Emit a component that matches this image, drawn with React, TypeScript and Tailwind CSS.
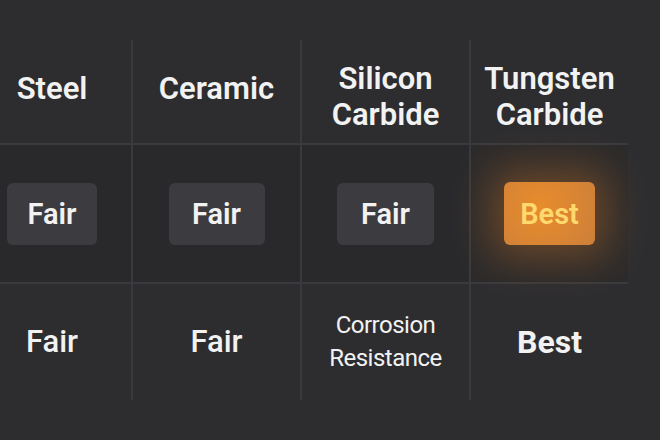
import React from 'react';

const FONT = { fontFamily: 'Roboto, "Liberation Sans", sans-serif' };

export default function App() {
  return (
    <div className="w-[660px] h-[440px] overflow-hidden bg-[#2d2d30] text-[#f2f2f2]" style={FONT}>
      <div className="mt-[40px] -ml-[27px] grid grid-cols-[160px_169px_169px_157px] grid-rows-[105px_139px_116px]">
        {/* header */}
        <div className="flex items-center justify-center border-r-2 border-b-2 border-[#3a3a3e] pb-[4px] text-[31px] font-semibold">
          Steel
        </div>
        <div className="flex items-center justify-center border-r-2 border-b-2 border-[#3a3a3e] pb-[4px] text-[31px] font-semibold">
          Ceramic
        </div>
        <div className="flex items-center justify-center border-r-2 border-b-2 border-[#3a3a3e] pt-[10px] text-center text-[31px] font-semibold leading-[36px]">
          Silicon<br />Carbide
        </div>
        <div className="flex items-center justify-center border-b-2 border-[#3a3a3e] pt-[10px] text-center text-[31px] font-semibold leading-[36px]">
          Tungsten<br />Carbide
        </div>

        {/* row 2 */}
        <div className="flex items-center justify-center border-r-2 border-b-2 border-[#3a3a3e] bg-[#29292c]">
          <div className="flex h-[62px] w-[90px] items-center justify-center rounded-md bg-[#3c3c40] pt-[2px] text-[29px] font-semibold">Fair</div>
        </div>
        <div className="flex items-center justify-center border-r-2 border-b-2 border-[#3a3a3e] bg-[#29292c]">
          <div className="flex h-[62px] w-[96px] items-center justify-center rounded-md bg-[#3c3c40] pt-[2px] text-[29px] font-semibold">Fair</div>
        </div>
        <div className="flex items-center justify-center border-r-2 border-b-2 border-[#3a3a3e] bg-[#29292c]">
          <div className="flex h-[62px] w-[97px] items-center justify-center rounded-md bg-[#3c3c40] pt-[2px] text-[29px] font-semibold">Fair</div>
        </div>
        <div className="flex items-center justify-center border-b-2 border-[#3a3a3e] bg-[#2b2a2b]">
          <div className="flex h-[63px] w-[91px] items-center justify-center rounded-md bg-[radial-gradient(circle_at_40%_40%,#e88c2c,#cc7f3a)] pt-[2px] text-[29px] font-semibold text-[#ffd86e] shadow-[0_0_40px_14px_rgba(230,130,40,0.33)]">
            Best
          </div>
        </div>

        {/* row 3 */}
        <div className="flex items-center justify-center border-r-2 border-[#3a3a3e] text-[31px] font-medium">Fair</div>
        <div className="flex items-center justify-center border-r-2 border-[#3a3a3e] text-[31px] font-medium">Fair</div>
        <div className="flex items-center justify-center border-r-2 border-[#3a3a3e] text-center text-[24px] leading-[33px] tracking-[-0.5px]">
          Corrosion<br />Resistance
        </div>
        <div className="flex items-center justify-center text-[32px] font-bold">Best</div>
      </div>
    </div>
  );
}
